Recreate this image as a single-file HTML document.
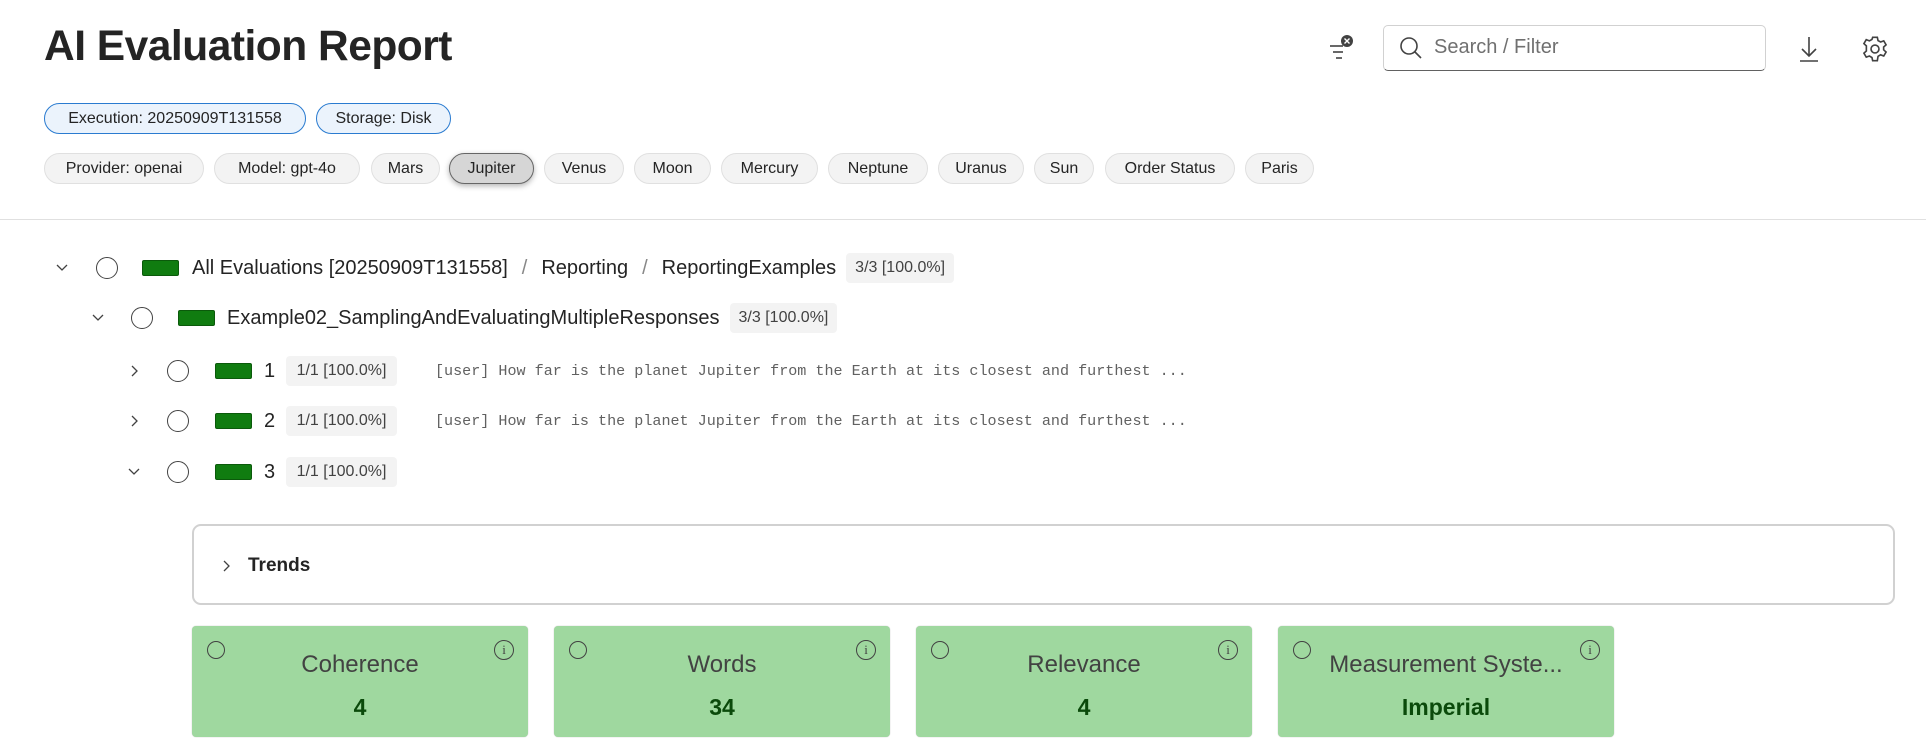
<!DOCTYPE html>
<html><head><meta charset="utf-8"><style>
*{box-sizing:border-box;margin:0;padding:0}
body{width:1926px;height:747px;background:#fff;font-family:"Liberation Sans",sans-serif;color:#242424;position:relative;overflow:hidden}
.a{position:absolute}
h1{position:absolute;left:44px;top:23px;font-size:42.5px;font-weight:bold;letter-spacing:-0.5px}
.chip{position:absolute;height:31px;border-radius:16px;font-size:16px;display:flex;align-items:center;justify-content:center;white-space:nowrap;color:#242424}
.c1{background:#ebf3fc;border:1px solid #2a7bd0;top:103px}
.c2{background:#f3f3f3;border:1px solid #e0e0e0;top:153px}
.sel{background:#d6d6d6;border:1px solid #666;box-shadow:0 2px 6px rgba(0,0,0,.3)}
.circ{position:absolute;width:22px;height:22px;border:1.5px solid #424242;border-radius:50%}
.bar{position:absolute;width:37px;height:16px;background:#107c10;border:1px solid #0b5a0b;border-radius:2px}
.badge{position:absolute;height:30px;background:#f3f3f3;border-radius:4px;font-size:16px;display:flex;align-items:center;justify-content:center;color:#424242}
.ib{display:inline-flex;height:30px;padding:0 9px;margin-left:10px;background:#f3f3f3;border-radius:4px;font-size:16px;align-items:center;color:#424242;vertical-align:top}
.txt{position:absolute;font-size:20px;white-space:nowrap;line-height:30px}
.mono{position:absolute;font-family:"Liberation Mono",monospace;font-size:15.1px;color:#616161;white-space:nowrap;line-height:30px}
.card{position:absolute;top:626px;width:336px;height:111px;background:#9fd89f;border-radius:4px;box-shadow:0 0 1px rgba(0,0,0,.3)}
.card .t{position:absolute;left:0;right:0;top:25px;text-align:center;font-size:24px;color:#424242}
.card .v{position:absolute;left:0;right:0;top:68px;text-align:center;font-size:23px;font-weight:bold;color:#0b4a0b}
.card .ci{position:absolute;left:15px;top:15px;width:18px;height:18px;border:1.3px solid #424242;border-radius:50%}
.card .ii{position:absolute;right:14px;top:14px;width:20px;height:20px;border:1.3px solid #424242;border-radius:50%;font-size:13px;text-align:center;line-height:17px;color:#424242;font-family:"Liberation Serif",serif}
</style></head><body>
<h1>AI Evaluation Report</h1>

<svg class="a" style="left:1328px;top:34px" width="30" height="30" viewBox="0 0 30 30"><g stroke="#424242" stroke-width="1.6"><line x1="2" y1="12" x2="15" y2="12"/><line x1="5" y1="18" x2="15" y2="18"/><line x1="8" y1="24" x2="14" y2="24"/></g><circle cx="19" cy="7" r="6" fill="#424242"/><path d="M16.5 4.5l5 5M21.5 4.5l-5 5" stroke="#fff" stroke-width="1.4"/></svg>
<div class="a" style="left:1383px;top:25px;width:383px;height:46px;border:1px solid #d1d1d1;border-bottom:1.5px solid #616161;border-radius:5px"></div>
<svg class="a" style="left:1398px;top:35px" width="26" height="26" viewBox="0 0 26 26"><circle cx="11" cy="11" r="8" fill="none" stroke="#424242" stroke-width="1.6"/><line x1="17" y1="17" x2="23" y2="23" stroke="#424242" stroke-width="1.6"/></svg>
<div class="a" style="left:1434px;top:36px;font-size:20px;color:#707070">Search / Filter</div>
<svg class="a" style="left:1797px;top:34px" width="24" height="30" viewBox="0 0 24 30"><path d="M12 3v19M5 15l7 7 7-7M3 27h18" fill="none" stroke="#424242" stroke-width="1.6"/></svg>
<svg class="a" style="left:1861px;top:35px" width="28" height="28" viewBox="0 0 24 24"><path fill="none" stroke="#424242" stroke-width="1.4" d="M10 2h4l.6 2.8 2.2 1.2 2.7-1 2 3.4-2.1 1.9v2.4l2.1 1.9-2 3.4-2.7-1-2.2 1.3L14 22h-4l-.6-2.7-2.2-1.3-2.7 1-2-3.4 2.1-1.9V9.3L2.5 7.4l2-3.4 2.7 1 2.2-1.2z"/><circle cx="12" cy="12" r="3.4" fill="none" stroke="#424242" stroke-width="1.4"/></svg>

<div class="chip c1" style="left:44px;width:262px">Execution: 20250909T131558</div>
<div class="chip c1" style="left:316px;width:135px">Storage: Disk</div>

<div class="chip c2" style="left:44px;width:160px">Provider: openai</div>
<div class="chip c2" style="left:214px;width:146px">Model: gpt-4o</div>
<div class="chip c2" style="left:371px;width:69px">Mars</div>
<div class="chip c2 sel" style="left:449px;width:85px">Jupiter</div>
<div class="chip c2" style="left:544px;width:80px">Venus</div>
<div class="chip c2" style="left:634px;width:77px">Moon</div>
<div class="chip c2" style="left:721px;width:97px">Mercury</div>
<div class="chip c2" style="left:828px;width:100px">Neptune</div>
<div class="chip c2" style="left:938px;width:86px">Uranus</div>
<div class="chip c2" style="left:1034px;width:60px">Sun</div>
<div class="chip c2" style="left:1105px;width:130px">Order Status</div>
<div class="chip c2" style="left:1245px;width:69px">Paris</div>

<div class="a" style="left:0;top:219px;width:1926px;height:1px;background:#e0e0e0"></div>

<svg class="a" style="left:55px;top:262px" width="14" height="12"><path d="M2 3l5 5 5-5" fill="none" stroke="#424242" stroke-width="1.3"/></svg>
<div class="circ" style="left:96px;top:257px"></div>
<div class="bar" style="left:142px;top:260px"></div>
<div class="txt" style="left:192px;top:253px">All Evaluations [20250909T131558]<span style="color:#888;margin:0 14px">/</span>Reporting<span style="color:#888;margin:0 14px">/</span>ReportingExamples<span class="ib">3/3 [100.0%]</span></div>

<svg class="a" style="left:91px;top:312px" width="14" height="12"><path d="M2 3l5 5 5-5" fill="none" stroke="#424242" stroke-width="1.3"/></svg>
<div class="circ" style="left:131px;top:307px"></div>
<div class="bar" style="left:178px;top:310px"></div>
<div class="txt" style="left:227px;top:303px">Example02_SamplingAndEvaluatingMultipleResponses<span class="ib">3/3 [100.0%]</span></div>

<svg class="a" style="left:129px;top:364px" width="12" height="14"><path d="M3 2l5 5-5 5" fill="none" stroke="#424242" stroke-width="1.3"/></svg>
<div class="circ" style="left:167px;top:360px"></div>
<div class="bar" style="left:215px;top:363px"></div>
<div class="txt" style="left:264px;top:356px">1</div>
<div class="badge" style="left:286px;top:356px;width:111px">1/1 [100.0%]</div>
<div class="mono" style="left:435px;top:356px">[user] How far is the planet Jupiter from the Earth at its closest and furthest ...</div>

<svg class="a" style="left:129px;top:414px" width="12" height="14"><path d="M3 2l5 5-5 5" fill="none" stroke="#424242" stroke-width="1.3"/></svg>
<div class="circ" style="left:167px;top:410px"></div>
<div class="bar" style="left:215px;top:413px"></div>
<div class="txt" style="left:264px;top:406px">2</div>
<div class="badge" style="left:286px;top:406px;width:111px">1/1 [100.0%]</div>
<div class="mono" style="left:435px;top:406px">[user] How far is the planet Jupiter from the Earth at its closest and furthest ...</div>

<svg class="a" style="left:127px;top:466px" width="14" height="12"><path d="M2 3l5 5 5-5" fill="none" stroke="#424242" stroke-width="1.3"/></svg>
<div class="circ" style="left:167px;top:461px"></div>
<div class="bar" style="left:215px;top:464px"></div>
<div class="txt" style="left:264px;top:457px">3</div>
<div class="badge" style="left:286px;top:457px;width:111px">1/1 [100.0%]</div>

<div class="a" style="left:192px;top:524px;width:1703px;height:81px;border:2.5px solid #d1d1d1;border-radius:9px"></div>
<svg class="a" style="left:222px;top:559px" width="10" height="14"><path d="M2 2l5 5-5 5" fill="none" stroke="#424242" stroke-width="1.3"/></svg>
<div class="a" style="left:248px;top:555px;font-size:19px;font-weight:bold;color:#242424">Trends</div>

<div class="card" style="left:192px"><div class="ci"></div><div class="ii">i</div><div class="t">Coherence</div><div class="v">4</div></div>
<div class="card" style="left:554px"><div class="ci"></div><div class="ii">i</div><div class="t">Words</div><div class="v">34</div></div>
<div class="card" style="left:916px"><div class="ci"></div><div class="ii">i</div><div class="t">Relevance</div><div class="v">4</div></div>
<div class="card" style="left:1278px"><div class="ci"></div><div class="ii">i</div><div class="t">Measurement Syste...</div><div class="v">Imperial</div></div>
</body></html>
